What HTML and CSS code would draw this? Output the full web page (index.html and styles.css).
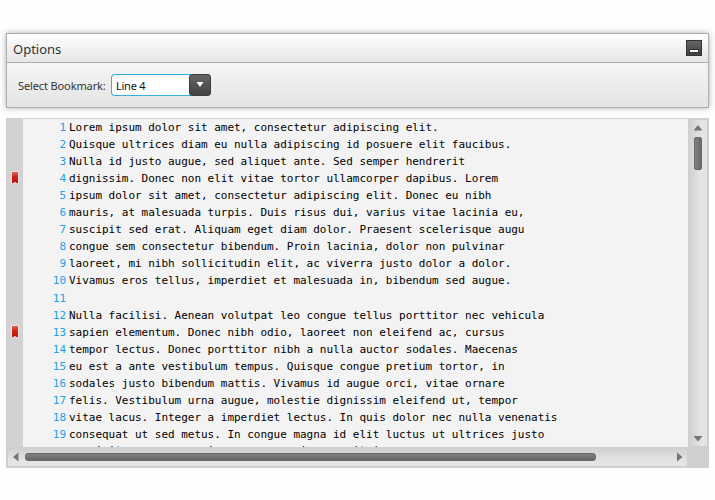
FILE: index.html
```html
<!DOCTYPE html>
<html lang="en">
<head>
<meta charset="utf-8">
<title>Bookmarks</title>
<link rel="stylesheet" href="styles.css">
</head>
<body>
<section class="panel">
  <header class="panel-head">
    <span class="title">Options</span>
    <button class="collapse" aria-label="Collapse"><i></i></button>
  </header>
  <div class="panel-body">
    <span class="label">Select Bookmark:</span>
    <div class="combo">
      <span class="value">Line 4</span>
      <span class="drop"><svg width="8" height="6" viewBox="0 0 8 6"><path d="M0.5 0H7.5L4 5Z" fill="#fff"/></svg></span>
    </div>
  </div>
</section>
<section class="editor">
  <div class="view">
    <ol class="lines" id="lines"></ol>
  </div>
  <div class="vbar">
    <svg class="arrow" width="10" height="6" viewBox="0 0 10 6"><path d="M5 0L9.5 5.5H.5Z"/></svg>
    <div class="thumb"></div>
    <svg class="arrow end" width="10" height="6" viewBox="0 0 10 6"><path d="M.5 0H9.5L5 5.5Z"/></svg>
  </div>
  <div class="hbar">
    <svg class="arrow" width="6" height="10" viewBox="0 0 6 10"><path d="M0 5L5.5 .5V9.5Z"/></svg>
    <div class="thumb"></div>
    <svg class="arrow end" width="6" height="10" viewBox="0 0 6 10"><path d="M0 .5V9.5L5.5 5Z"/></svg>
  </div>
</section>
<script src="script.js"></script>
</body>
</html>
```
FILE: script.js
```js
const text = [
  "Lorem ipsum dolor sit amet, consectetur adipiscing elit.",
  "Quisque ultrices diam eu nulla adipiscing id posuere elit faucibus.",
  "Nulla id justo augue, sed aliquet ante. Sed semper hendrerit",
  "dignissim. Donec non elit vitae tortor ullamcorper dapibus. Lorem",
  "ipsum dolor sit amet, consectetur adipiscing elit. Donec eu nibh",
  "mauris, at malesuada turpis. Duis risus dui, varius vitae lacinia eu,",
  "suscipit sed erat. Aliquam eget diam dolor. Praesent scelerisque augu",
  "congue sem consectetur bibendum. Proin lacinia, dolor non pulvinar",
  "laoreet, mi nibh sollicitudin elit, ac viverra justo dolor a dolor.",
  "Vivamus eros tellus, imperdiet et malesuada in, bibendum sed augue.",
  "",
  "Nulla facilisi. Aenean volutpat leo congue tellus porttitor nec vehicula",
  "sapien elementum. Donec nibh odio, laoreet non eleifend ac, cursus",
  "tempor lectus. Donec porttitor nibh a nulla auctor sodales. Maecenas",
  "eu est a ante vestibulum tempus. Quisque congue pretium tortor, in",
  "sodales justo bibendum mattis. Vivamus id augue orci, vitae ornare",
  "felis. Vestibulum urna augue, molestie dignissim eleifend ut, tempor",
  "vitae lacus. Integer a imperdiet lectus. In quis dolor nec nulla venenatis",
  "consequat ut sed metus. In congue magna id elit luctus ut ultrices justo",
  "suscipit nunc ornare in massa a proin sem sit in"
];
const bookmarks = [4, 13];
const list = document.getElementById("lines");
text.forEach((line, i) => {
  const n = i + 1;
  const row = document.createElement("li");
  const mark = document.createElement("span");
  const num = document.createElement("span");
  const code = document.createElement("span");
  mark.className = "mark";
  num.className = "num";
  code.className = "code";
  if (bookmarks.includes(n)) {
    mark.innerHTML = '<svg width="8" height="14" viewBox="0 0 8 14"><path d="M.5 .5H7.5V13.2L4 11.6L.5 13.2Z" fill="url(#red)" stroke="#f1dfdd"/><defs><linearGradient id="red" x2="0" y2="1"><stop stop-color="#df6a60"/><stop offset=".4" stop-color="#cc251b"/><stop offset="1" stop-color="#b80c04"/></linearGradient></defs></svg>';
  }
  if (n < 20) num.textContent = n;
  code.textContent = line;
  row.append(mark, num, code);
  list.append(row);
});
```
FILE: styles.css
```css
* { box-sizing: border-box; }
body {
  margin: 0;
  padding: 33px 6px 0;
  height: 500px;
  overflow: hidden;
  background: #fefefe;
  color: #333;
  font-family: "Noto Sans", "Open Sans", sans-serif;
}
.panel {
  width: 703px;
  height: 75px;
  border: 1px solid #aeaeae;
  box-shadow: 0 0 6px rgba(0, 0, 0, .32);
}
.panel-head {
  display: flex;
  align-items: center;
  justify-content: space-between;
  height: 29px;
  padding: 0 6px;
  border-bottom: 1px solid #aeaeae;
  background: linear-gradient(#fefefe, #e6e6e6);
}
.title { font-size: 13px; line-height: 18px; padding-top: 1px; }
.collapse {
  display: flex;
  align-items: flex-end;
  justify-content: center;
  width: 16px;
  height: 16px;
  padding: 0 0 3px;
  border: 1px solid #333;
  background: linear-gradient(#656565, #414141);
}
.collapse i { width: 8px; height: 2px; background: #fff; box-shadow: 0 0 0 1px #333; }
.panel-body {
  display: flex;
  height: 44px;
  padding: 11px 11px 0;
  background: linear-gradient(#f5f5f5, #e4e4e4);
  font-size: 11px;
  line-height: 22px;
}
.label { width: 93px; padding-top: 1px; white-space: nowrap; letter-spacing: -.12px; }
.combo { display: flex; width: 100px; height: 22px; }
.value {
  flex: 1;
  height: 22px;
  margin-right: -2px;
  padding-left: 4px;
  border: 1px solid #39aee0;
  border-right: 0;
  border-radius: 4px 0 0 4px;
  background: linear-gradient(#f3f3f3, #fff 5px);
  color: #111;
  letter-spacing: -.25px;
}
.drop {
  display: flex;
  justify-content: center;
  width: 22px;
  height: 22px;
  padding-top: 7px;
  border: 1px solid #3b3b3b;
  border-radius: 3px;
  background: linear-gradient(#656565, #414141);
}
.drop svg { display: block; }
.editor {
  display: grid;
  grid-template: 328px 20px / 681px 20px;
  width: 703px;
  height: 350px;
  margin-top: 10px;
  border: 1px solid #cfcfcf;
  background: #cfcfcf;
}
.view {
  overflow: hidden;
  background: linear-gradient(90deg, #d2d2d2 16px, #f3f3f3 16px);
}
.lines {
  margin: 0;
  padding: 0;
  list-style: none;
  font: 11px/17px "DejaVu Sans Mono", monospace;
  letter-spacing: -.022px;
}
.lines li { display: flex; height: 17px; white-space: pre; }
.lines li:nth-child(11) { margin-top: 1px; }
.lines li:last-child { margin-top: -1px; }
.mark { width: 16px; padding: 1px 0 0 4px; }
.mark svg { display: block; }
.num { width: 43px; color: #1ba1e2; text-align: right; }
.code { padding-left: 3px; color: #000; }
.vbar {
  display: flex;
  flex-direction: column;
  align-items: center;
  margin: 1px;
  background: linear-gradient(90deg, #d0d0d0, #e4e4e4 12px);
}
.arrow { display: block; flex: none; fill: #757575; }
.vbar .arrow { margin-top: 5px; }
.vbar .thumb {
  width: 8px;
  height: 33px;
  margin-top: 6px;
  border: 1px solid #686868;
  border-radius: 2px;
  background: linear-gradient(90deg, #808080, #686868);
}
.vbar .arrow.end { margin: auto 0 4px; }
.hbar {
  display: flex;
  align-items: center;
  height: 18px;
  margin: 1px 1px 0 1px;
  padding: 0 4px 0 5px;
  background: linear-gradient(#d0d0d0, #e4e4e4 12px);
}
.hbar .thumb {
  width: 571px;
  height: 8px;
  margin-left: 6px;
  border: 1px solid #686868;
  border-radius: 3px;
  background: linear-gradient(#808080, #686868);
}
.hbar .arrow.end { margin-left: auto; }
```
